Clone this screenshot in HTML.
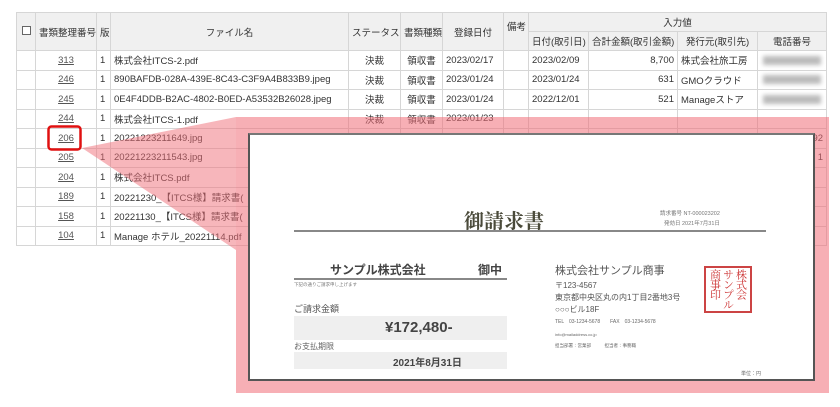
<!DOCTYPE html>
<html><head><meta charset="utf-8"><style>
*{margin:0;padding:0;box-sizing:border-box}
body{width:840px;height:407px;background:#fff;position:relative;overflow:hidden;font-family:"Liberation Sans","Noto Sans CJK JP",sans-serif;color:#333}
table{position:absolute;left:16px;top:12px;width:810px;border-collapse:collapse;table-layout:fixed;font-size:9.5px}
td,th{border:1px solid #d6d6d6;height:19.5px;padding:0 3px;white-space:nowrap;overflow:hidden;font-weight:normal}
th{background:#f0f0f0;height:19px}
.c{text-align:center}.r{text-align:right}
a{color:#555;text-decoration:underline}
.blur{display:block;height:9px;background:#bbb;filter:blur(2px);margin:0 2px}
.ab{position:absolute}
.sc{writing-mode:vertical-rl;font-size:11px;line-height:13px;color:#c33;font-family:'Noto Serif CJK SC',serif;letter-spacing:-1px}
</style></head><body>
<table>
<colgroup><col style="width:19px"><col style="width:61px"><col style="width:14px"><col style="width:238px"><col style="width:52px"><col style="width:42px"><col style="width:61px"><col style="width:25px"><col style="width:60px"><col style="width:89px"><col style="width:80px"><col style="width:69px"></colgroup>
<tr><th rowspan="2" style="height:38px"><span style="display:inline-block;width:9px;height:9px;border:1px solid #666;background:#fff"></span></th><th rowspan="2">書類整理番号</th><th rowspan="2">版</th><th rowspan="2">ファイル名</th><th rowspan="2">ステータス</th><th rowspan="2">書類種類</th><th rowspan="2">登録日付</th><th rowspan="2" style="vertical-align:top;padding-top:6px">備考</th><th colspan="4">入力値</th></tr>
<tr><th>日付(取引日)</th><th>合計金額(取引金額)</th><th>発行元(取引先)</th><th>電話番号</th></tr>
<tr><td></td><td class="c"><a>313</a></td><td>1</td><td>株式会社ITCS-2.pdf</td><td class="c">決裁</td><td class="c">領収書</td><td>2023/02/17</td><td></td><td>2023/02/09</td><td class="r">8,700</td><td>株式会社旅工房</td><td><span class="blur"></span></td></tr>
<tr><td></td><td class="c"><a>246</a></td><td>1</td><td>890BAFDB-028A-439E-8C43-C3F9A4B833B9.jpeg</td><td class="c">決裁</td><td class="c">領収書</td><td>2023/01/24</td><td></td><td>2023/01/24</td><td class="r">631</td><td>GMOクラウド</td><td><span class="blur"></span></td></tr>
<tr><td></td><td class="c"><a>245</a></td><td>1</td><td>0E4F4DDB-B2AC-4802-B0ED-A53532B26028.jpeg</td><td class="c">決裁</td><td class="c">領収書</td><td>2023/01/24</td><td></td><td>2022/12/01</td><td class="r">521</td><td>Manageストア</td><td><span class="blur"></span></td></tr>
<tr><td></td><td class="c"><a>244</a></td><td>1</td><td>株式会社ITCS-1.pdf</td><td class="c">決裁</td><td class="c">領収書</td><td>2023/01/23</td><td></td><td></td><td></td><td></td><td></td></tr>
<tr><td></td><td class="c"><a>206</a></td><td>1</td><td>20221223211649.jpg</td><td></td><td></td><td></td><td></td><td></td><td></td><td></td><td class="r">92</td></tr>
<tr><td></td><td class="c"><a>205</a></td><td>1</td><td>20221223211543.jpg</td><td></td><td></td><td></td><td></td><td></td><td></td><td></td><td class="r">1</td></tr>
<tr><td></td><td class="c"><a>204</a></td><td>1</td><td>株式会社ITCS.pdf</td><td></td><td></td><td></td><td></td><td></td><td></td><td></td><td></td></tr>
<tr><td></td><td class="c"><a>189</a></td><td>1</td><td>20221230_【ITCS様】請求書(</td><td></td><td></td><td></td><td></td><td></td><td></td><td></td><td></td></tr>
<tr><td></td><td class="c"><a>158</a></td><td>1</td><td>20221130_【ITCS様】請求書(</td><td></td><td></td><td></td><td></td><td></td><td></td><td></td><td></td></tr>
<tr><td></td><td class="c"><a>104</a></td><td>1</td><td>Manage ホテル_20221114.pdf</td><td></td><td></td><td></td><td></td><td></td><td></td><td></td><td></td></tr>
</table>
<svg class="ab" style="left:0;top:0" width="840" height="407">
<polygon points="82,148 236,117 236,250" fill="rgba(240,110,120,0.5)"/>
<rect x="236" y="117" width="593" height="276" fill="rgba(240,110,120,0.55)"/>
<rect x="48.5" y="126.5" width="32" height="23" rx="3" fill="none" stroke="#e01010" stroke-width="2.5"/>
</svg>
<div class="ab" style="left:248px;top:133px;width:567px;height:248px;background:#fff;border:2px solid #555;border-top-color:#777"></div>
<div class="ab" style="left:464px;top:205px;font-size:20px;font-weight:bold;font-family:'Noto Serif CJK SC',serif;color:#4a4a3a">御請求書</div>
<div class="ab" style="left:660px;top:209px;font-size:5.5px;color:#777;line-height:10px;text-align:right">請求番号 NT-000023202<br>発効日 2021年7月31日</div>
<div class="ab" style="left:294px;top:230px;width:472px;height:2px;background:#888"></div>
<div class="ab" style="left:330px;top:261px;font-size:12px;font-weight:bold;color:#444">サンプル株式会社</div>
<div class="ab" style="left:478px;top:261px;font-size:12px;font-weight:bold;color:#444">御中</div>
<div class="ab" style="left:294px;top:278px;width:213px;height:2px;background:#888"></div>
<div class="ab" style="left:294px;top:282px;font-size:4.5px;color:#777">下記の通りご請求申し上げます</div>
<div class="ab" style="left:294px;top:302px;font-size:9px;color:#555">ご請求金額</div>
<div class="ab" style="left:294px;top:316px;width:213px;height:24px;background:#efefef"></div>
<div class="ab" style="left:385px;top:319px;font-size:15px;font-weight:bold;color:#444">¥172,480-</div>
<div class="ab" style="left:294px;top:341px;font-size:8px;color:#666">お支払期限</div>
<div class="ab" style="left:294px;top:352px;width:213px;height:17px;background:#efefef"></div>
<div class="ab" style="left:393px;top:354px;font-size:10px;font-weight:bold;color:#444">2021年8月31日</div>
<div class="ab" style="left:555px;top:262px;font-size:11px;color:#555">株式会社サンプル商事</div>
<div class="ab" style="left:555px;top:280px;font-size:8px;color:#555;line-height:12px">〒123-4567<br>東京都中央区丸の内1丁目2番地3号<br>○○○ビル18F</div>
<div class="ab" style="left:555px;top:318px;font-size:5px;color:#666">TEL　03-1234-5678　　FAX　03-1234-5678</div>
<div class="ab" style="left:555px;top:332px;font-size:4px;color:#666">info@mailaddress.co.jp</div>
<div class="ab" style="left:555px;top:343px;font-size:4.5px;color:#666">担当部署：営業部　　　担当者：事務職</div>
<div class="ab" style="left:704px;top:266px;width:48px;height:47px;border:2px solid #c44;overflow:hidden;display:flex;flex-direction:row-reverse;justify-content:center;padding-top:1px">
<div class="sc">株式会</div><div class="sc">サンプル</div><div class="sc">商事印</div></div>
<div class="ab" style="left:741px;top:370px;font-size:5px;color:#666">単位：円</div>
</body></html>
